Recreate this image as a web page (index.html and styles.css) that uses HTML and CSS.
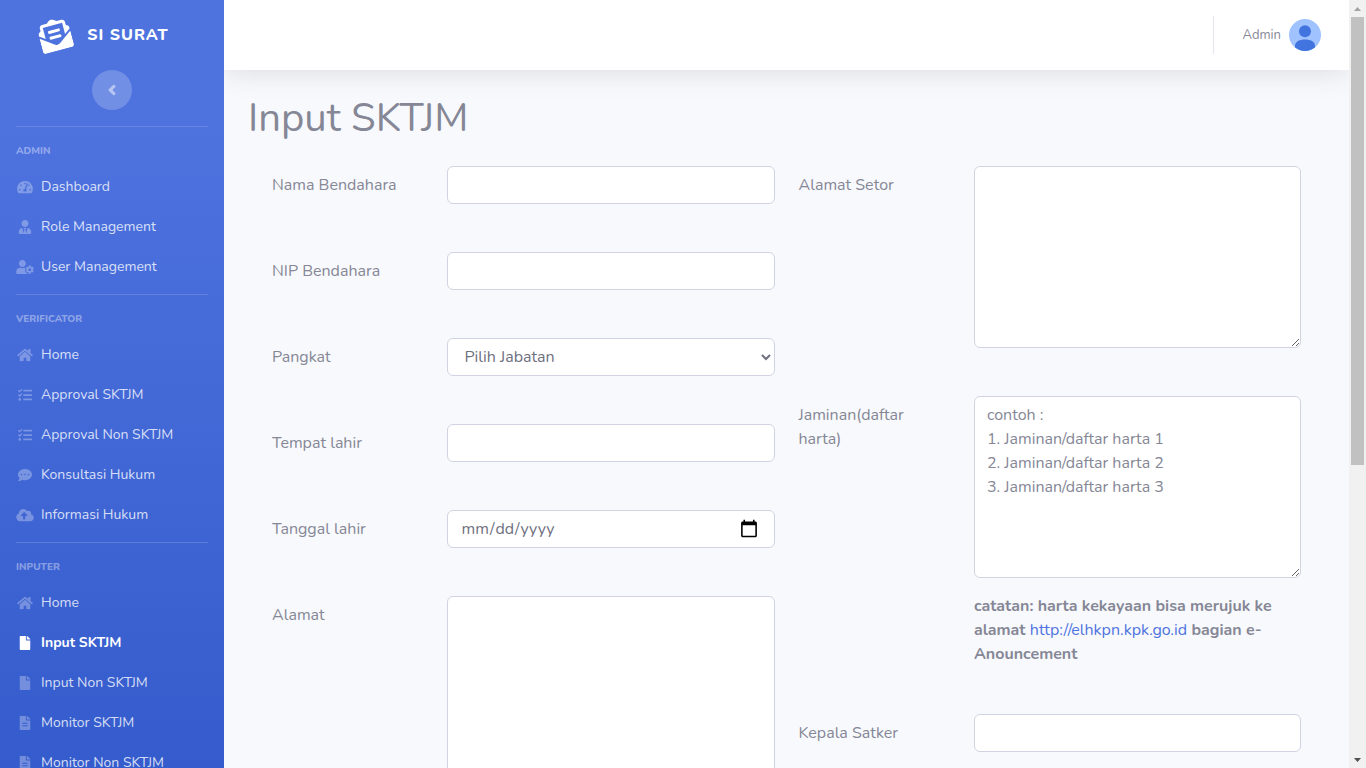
FILE: index.html
```html
<!DOCTYPE html>
<html lang="id">
<head>
<meta charset="utf-8">
<title>Input SKTJM</title>
<link rel="stylesheet" href="styles.css">
</head>
<body>
<svg class="sprite" aria-hidden="true">
  <symbol id="i-dash" viewBox="0 0 576 512"><path d="M288 32C128.94 32 0 160.94 0 320c0 52.8 14.25 102.26 39.06 144.8 5.61 9.62 16.3 15.2 27.44 15.2h443c11.14 0 21.83-5.58 27.44-15.2C561.75 422.26 576 372.8 576 320c0-159.06-128.94-288-288-288zm0 64c14.71 0 26.58 10.13 30.32 23.65-1.11 2.26-2.64 4.23-3.45 6.67l-9.22 27.67c-5.13 3.49-10.97 6.01-17.64 6.01-17.67 0-32-14.33-32-32S270.33 96 288 96zM96 384c-17.67 0-32-14.33-32-32s14.33-32 32-32 32 14.33 32 32-14.33 32-32 32zm48-160c-17.67 0-32-14.33-32-32s14.33-32 32-32 32 14.33 32 32-14.33 32-32 32zm246.77-72.41l-61.33 184C343.13 347.33 352 364.54 352 384c0 11.72-3.38 22.55-8.88 32H232.88c-5.5-9.45-8.88-20.28-8.88-32 0-33.94 26.5-61.43 59.9-63.59l61.34-184.01c4.17-12.56 17.73-19.45 30.36-15.17 12.57 4.19 19.35 17.79 15.17 30.36zm14.66 57.2l15.52-46.55c3.47-1.29 7.13-2.23 11.05-2.23 17.67 0 32 14.33 32 32s-14.33 32-32 32c-11.38-.01-20.89-6.28-26.57-15.22zM480 384c-17.67 0-32-14.33-32-32s14.33-32 32-32 32 14.33 32 32-14.33 32-32 32z"/></symbol>
  <symbol id="i-tie" viewBox="0 0 448 512"><path d="M224 256c70.7 0 128-57.3 128-128S294.7 0 224 0 96 57.3 96 128s57.3 128 128 128zm95.8 32.6L272 480l-32-136 32-56h-96l32 56-32 136-47.8-191.4C56.9 292 0 350.3 0 422.4V464c0 26.5 21.5 48 48 48h352c26.5 0 48-21.5 48-48v-41.6c0-72.1-56.9-130.4-128.2-133.8z"/></symbol>
  <symbol id="i-cog" viewBox="0 0 640 512"><path d="M610.5 373.3c2.6-14.1 2.6-28.5 0-42.6l25.8-14.9c3-1.7 4.3-5.2 3.3-8.5-6.7-21.6-18.2-41.2-33.2-57.4-2.3-2.5-6-3.1-9-1.4l-25.8 14.9c-10.9-9.3-23.4-16.5-36.9-21.3v-29.8c0-3.4-2.4-6.4-5.7-7.1-22.3-5-45-4.8-66.2 0-3.3.7-5.7 3.7-5.7 7.1v29.8c-13.5 4.8-26 12-36.9 21.3l-25.8-14.9c-2.9-1.7-6.7-1.1-9 1.4-15 16.2-26.5 35.8-33.2 57.4-1 3.3.4 6.8 3.3 8.5l25.8 14.9c-2.6 14.1-2.6 28.5 0 42.6l-25.8 14.9c-3 1.7-4.3 5.2-3.3 8.5 6.7 21.6 18.2 41.1 33.2 57.4 2.3 2.5 6 3.1 9 1.4l25.8-14.9c10.9 9.3 23.4 16.5 36.9 21.3v29.8c0 3.4 2.4 6.4 5.7 7.1 22.3 5 45 4.8 66.2 0 3.3-.7 5.7-3.7 5.7-7.1v-29.8c13.5-4.8 26-12 36.9-21.3l25.8 14.9c2.9 1.7 6.7 1.1 9-1.4 15-16.2 26.5-35.8 33.2-57.4 1-3.3-.4-6.8-3.3-8.5l-25.8-14.9zM496 400.5c-26.8 0-48.5-21.8-48.5-48.5s21.8-48.5 48.5-48.5 48.5 21.8 48.5 48.5-21.7 48.5-48.5 48.5zM224 256c70.7 0 128-57.3 128-128S294.7 0 224 0 96 57.3 96 128s57.3 128 128 128zm201.2 226.5c-2.3-1.2-4.6-2.6-6.8-3.9l-7.9 4.6c-6 3.4-12.8 5.3-19.6 5.3-10.9 0-21.4-4.6-28.9-12.6-18.3-19.8-32.3-43.9-40.2-69.6-5.5-17.7 1.9-36.4 17.9-45.7l7.9-4.6c-.1-2.6-.1-5.2 0-7.8l-7.9-4.6c-16-9.2-23.4-28-17.9-45.7.9-2.9 2.2-5.8 3.2-8.7-3.8-.3-7.5-1.2-11.4-1.2h-16.7c-22.2 10.2-46.9 16-72.9 16s-50.6-5.8-72.9-16h-16.7C60.2 288 0 348.2 0 422.4V464c0 26.5 21.5 48 48 48h352c10.1 0 19.5-3.2 27.2-8.5-1.2-3.8-2-7.7-2-11.8v-9.2z"/></symbol>
  <symbol id="i-home" viewBox="0 0 576 512"><path d="M280.37 148.26L96 300.11V464a16 16 0 0 0 16 16l112.06-.29a16 16 0 0 0 15.92-16V368a16 16 0 0 1 16-16h64a16 16 0 0 1 16 16v95.64a16 16 0 0 0 16 16.05L464 480a16 16 0 0 0 16-16V300L295.67 148.26a12.19 12.19 0 0 0-15.3 0zM571.6 251.47L488 182.56V44.05a12 12 0 0 0-12-12h-56a12 12 0 0 0-12 12v72.61L318.47 43a48 48 0 0 0-61 0L4.34 251.47a12 12 0 0 0-1.6 16.9l25.5 31A12 12 0 0 0 45.15 301l235.22-193.74a12.19 12.19 0 0 1 15.3 0L530.9 301a12 12 0 0 0 16.9-1.6l25.5-31a12 12 0 0 0-1.7-16.93z"/></symbol>
  <symbol id="i-tasks" viewBox="0 0 512 512"><path d="M139.61 35.5a12 12 0 0 0-17 0L58.93 98.81l-22.7-22.12a12 12 0 0 0-17 0L3.53 92.41a12 12 0 0 0 0 17l47.59 47.4a12.78 12.78 0 0 0 17.61 0l15.59-15.62L156.52 69a12.09 12.09 0 0 0 .09-17zm0 159.19a12 12 0 0 0-17 0l-63.68 63.72-22.7-22.1a12 12 0 0 0-17 0L3.53 252a12 12 0 0 0 0 17L51 316.5a12.77 12.77 0 0 0 17.6 0l15.7-15.69 72.2-72.22a12 12 0 0 0 .09-16.9zM64 368c-26.49 0-48.59 21.5-48.59 48S37.53 464 64 464a48 48 0 0 0 0-96zm432 16H208a16 16 0 0 0-16 16v32a16 16 0 0 0 16 16h288a16 16 0 0 0 16-16v-32a16 16 0 0 0-16-16zm0-320H208a16 16 0 0 0-16 16v32a16 16 0 0 0 16 16h288a16 16 0 0 0 16-16V80a16 16 0 0 0-16-16zm0 160H208a16 16 0 0 0-16 16v32a16 16 0 0 0 16 16h288a16 16 0 0 0 16-16v-32a16 16 0 0 0-16-16z"/></symbol>
  <symbol id="i-chat" viewBox="0 0 512 512"><path d="M256 32C114.6 32 0 125.1 0 240c0 49.6 21.4 95 57 130.7C44.5 421.1 2.7 466 2.2 466.5c-2.2 2.3-2.8 5.7-1.5 8.7S4.8 480 8 480c66.3 0 116-31.8 140.6-51.4 32.7 12.3 69 19.4 107.4 19.4 141.4 0 256-93.1 256-208S397.4 32 256 32zM128 272c-17.7 0-32-14.3-32-32s14.3-32 32-32 32 14.3 32 32-14.3 32-32 32zm128 0c-17.7 0-32-14.3-32-32s14.3-32 32-32 32 14.3 32 32-14.3 32-32 32zm128 0c-17.7 0-32-14.3-32-32s14.3-32 32-32 32 14.3 32 32-14.3 32-32 32z"/></symbol>
  <symbol id="i-cloud" viewBox="0 0 640 512"><path d="M537.6 226.6c4.1-10.7 6.4-22.4 6.4-34.6 0-53-43-96-96-96-19.7 0-38.1 6-53.3 16.2C367 64.2 315.3 32 256 32c-88.4 0-160 71.6-160 160 0 2.7.1 5.4.2 8.1C40.2 219.8 0 273.2 0 336c0 79.5 64.5 144 144 144h368c70.7 0 128-57.3 128-128 0-61.9-44-113.6-102.4-125.4zM393.4 288H328v112c0 8.8-7.2 16-16 16h-48c-8.8 0-16-7.2-16-16V288h-65.4c-14.3 0-21.4-17.2-11.3-27.3l105.4-105.4c6.2-6.2 16.4-6.2 22.6 0l105.4 105.4c10.1 10.1 2.9 27.3-11.3 27.3z"/></symbol>
  <symbol id="i-file" viewBox="0 0 384 512"><path d="M224 136V0H24C10.7 0 0 10.7 0 24v464c0 13.3 10.7 24 24 24h336c13.3 0 24-10.7 24-24V160H248c-13.2 0-24-10.8-24-24zm160-14.1v6.1H256V0h6.1c6.4 0 12.5 2.5 17 7l97.9 98c4.5 4.5 7 10.6 7 16.9z"/></symbol>
  <symbol id="i-filetext" viewBox="0 0 384 512"><path fill-rule="evenodd" d="M224 136V0H24C10.7 0 0 10.7 0 24v464c0 13.3 10.7 24 24 24h336c13.3 0 24-10.7 24-24V160H248c-13.2 0-24-10.8-24-24zm160-14.1v6.1H256V0h6.1c6.4 0 12.5 2.5 17 7l97.9 98c4.5 4.5 7 10.6 7 16.9zM96 246h192v34H96zM96 340h192v34H96z"/></symbol>
</svg>
<div class="app">
  <nav class="sidebar">
    <a class="brand" href="#">
      <svg class="brand-icon" viewBox="0 0 512 512" aria-hidden="true"><path d="M176 216h160c8.84 0 16-7.16 16-16v-16c0-8.84-7.16-16-16-16H176c-8.84 0-16 7.16-16 16v16c0 8.84 7.16 16 16 16zm-16 80c0 8.84 7.16 16 16 16h160c8.84 0 16-7.16 16-16v-16c0-8.84-7.16-16-16-16H176c-8.84 0-16 7.16-16 16v16zm96 121.13c-16.42 0-32.84-5.06-46.86-15.19L0 250.86V464c0 26.51 21.49 48 48 48h416c26.51 0 48-21.49 48-48V250.86L302.86 401.94c-14.02 10.12-30.44 15.19-46.86 15.19zm237.61-254.18c-8.85-6.94-17.24-13.47-29.61-22.81V96c0-26.51-21.49-48-48-48h-77.55c-3.04-2.2-5.87-4.26-9.04-6.56C312.6 29.17 279.2-.35 256 0c-23.2-.35-56.59 29.17-73.41 41.44-3.17 2.3-6 4.36-9.04 6.56H96c-26.51 0-48 21.49-48 48v44.14c-12.37 9.33-20.76 15.87-29.61 22.81A47.995 47.995 0 0 0 0 200.72v10.65l96 69.35V96h320v184.72l96-69.35v-10.65c0-14.74-6.78-28.67-18.39-37.77z"/></svg>
      <span class="brand-text">SI SURAT</span>
    </a>
    <button class="toggle" type="button" aria-label="Toggle sidebar"><svg class="toggle-icon" viewBox="0 0 256 512"><path d="M31.7 239l136-136c9.4-9.4 24.6-9.4 33.9 0l22.6 22.6c9.4 9.4 9.4 24.6 0 33.9L127.9 256l96.4 96.4c9.4 9.4 9.4 24.6 0 33.9L201.7 409c-9.4 9.4-24.6 9.4-33.9 0l-136-136c-9.5-9.4-9.5-24.6-.1-34z"/></svg></button>
    <section class="group">
      <h2 class="group-title">ADMIN</h2>
      <a class="link" href="#"><svg class="icon"><use href="#i-dash"/></svg>Dashboard</a>
      <a class="link" href="#"><svg class="icon"><use href="#i-tie"/></svg>Role Management</a>
      <a class="link" href="#"><svg class="icon"><use href="#i-cog"/></svg>User Management</a>
    </section>
    <section class="group">
      <h2 class="group-title">VERIFICATOR</h2>
      <a class="link" href="#"><svg class="icon"><use href="#i-home"/></svg>Home</a>
      <a class="link" href="#"><svg class="icon"><use href="#i-tasks"/></svg>Approval SKTJM</a>
      <a class="link" href="#"><svg class="icon"><use href="#i-tasks"/></svg>Approval Non SKTJM</a>
      <a class="link" href="#"><svg class="icon"><use href="#i-chat"/></svg>Konsultasi Hukum</a>
      <a class="link" href="#"><svg class="icon"><use href="#i-cloud"/></svg>Informasi Hukum</a>
    </section>
    <section class="group">
      <h2 class="group-title">INPUTER</h2>
      <a class="link" href="#"><svg class="icon"><use href="#i-home"/></svg>Home</a>
      <a class="link active" href="#"><svg class="icon"><use href="#i-file"/></svg>Input SKTJM</a>
      <a class="link" href="#"><svg class="icon"><use href="#i-file"/></svg>Input Non SKTJM</a>
      <a class="link" href="#"><svg class="icon"><use href="#i-filetext"/></svg>Monitor SKTJM</a>
      <a class="link" href="#"><svg class="icon"><use href="#i-filetext"/></svg>Monitor Non SKTJM</a>
    </section>
  </nav>
  <div class="page">
    <header class="topbar">
      <a class="user" href="#">Admin
        <svg class="avatar" viewBox="0 0 32 32" aria-hidden="true"><clipPath id="round"><circle cx="16" cy="16" r="16"/></clipPath><g clip-path="url(#round)"><path fill="#a0c3ff" d="M0 0h32v32H0z"/><circle cx="16" cy="12.3" r="6" fill="#4274e0"/><path fill="#4274e0" d="M6 27c0-4.500 4.500-6.500 10-6.500s10 2 10 6.500v5H6z"/></g></svg>
      </a>
    </header>
    <main class="content">
      <h1 class="title">Input SKTJM</h1>
      <form class="form">
        <div class="col">
          <div class="row"><label class="label" for="nama">Nama Bendahara</label><div class="cell"><input class="control" id="nama" type="text"></div></div>
          <div class="row"><label class="label" for="nip">NIP Bendahara</label><div class="cell"><input class="control" id="nip" type="text"></div></div>
          <div class="row"><label class="label" for="pangkat">Pangkat</label><div class="cell"><select class="control" id="pangkat"><option>Pilih Jabatan</option></select></div></div>
          <div class="row"><label class="label" for="tempat">Tempat lahir</label><div class="cell"><input class="control" id="tempat" type="text"></div></div>
          <div class="row"><label class="label" for="tanggal">Tanggal lahir</label><div class="cell"><input class="control" id="tanggal" type="date"></div></div>
          <div class="row"><label class="label" for="alamat">Alamat</label><div class="cell"><textarea class="control" id="alamat" rows="7"></textarea></div></div>
        </div>
        <div class="col">
          <div class="row"><label class="label" for="setor">Alamat Setor</label><div class="cell"><textarea class="control" id="setor" rows="7"></textarea></div></div>
          <div class="row"><label class="label" for="jaminan">Jaminan(daftar harta)</label><div class="cell"><textarea class="control" id="jaminan" rows="7" placeholder="contoh :
1. Jaminan/daftar harta 1
2. Jaminan/daftar harta 2
3. Jaminan/daftar harta 3"></textarea><p class="note">catatan: harta kekayaan bisa merujuk ke alamat <a class="note-link" href="http://elhkpn.kpk.go.id">http://elhkpn.kpk.go.id</a> bagian e-Anouncement</p></div></div>
          <div class="row"><label class="label" for="satker">Kepala Satker</label><div class="cell"><input class="control" id="satker" type="text"></div></div>
        </div>
      </form>
    </main>
  </div>
  <div class="scrollbar" aria-hidden="true">
    <svg class="arrow" viewBox="0 0 17 17"><path fill="#a3a3a3" d="M5 11h7L8.500 7z"/></svg>
    <div class="track"><div class="thumb"></div></div>
    <svg class="arrow" viewBox="0 0 17 17"><path fill="#505050" d="M5 7h7l-3.500 4z"/></svg>
  </div>
</div>
</body>
</html>
```
FILE: styles.css
```css
*, *::before, *::after { box-sizing: border-box; }
body {
  margin: 0;
  font-family: Nunito, Lato, sans-serif;
  font-size: 16px;
  line-height: 24px;
  color: #858796;
  background: #f8f9fc;
}
a { text-decoration: none; }
.sprite { display: none; }
.app { display: flex; height: 100vh; overflow: hidden; }

.sidebar {
  flex: 0 0 224px;
  overflow: hidden;
  background: linear-gradient(180deg, #4e73df 125px, #224abe 1255px);
}
.brand {
  display: flex;
  align-items: center;
  justify-content: center;
  gap: 16px;
  height: 70px;
  padding-right: 16px;
  color: #fff;
}
.brand-icon { width: 32px; height: 32px; fill: currentColor; transform: rotate(-15deg); }
.brand-text { font-size: 16px; font-weight: 800; letter-spacing: 1px; }
.toggle {
  display: flex;
  align-items: center;
  justify-content: center;
  width: 40px;
  height: 40px;
  margin: 0 auto 16px;
  padding: 0;
  border: 0;
  border-radius: 50%;
  background: rgba(255, 255, 255, .2);
}
.toggle-icon {
  width: 8px;
  height: 16px;
  fill: #b8c7f2;
  stroke: #b8c7f2;
  stroke-width: 24;
}
.group { padding-bottom: 7px; }
.group::before {
  content: "";
  display: block;
  margin: 0 16px 16px;
  border-top: 1px solid rgba(255, 255, 255, .15);
}
.group-title {
  margin: 0;
  padding: 0 16px 7px;
  font-size: 10px;
  line-height: 17px;
  font-weight: 800;
  color: rgba(255, 255, 255, .4);
}
.link {
  display: flex;
  align-items: center;
  gap: 7px;
  height: 40px;
  padding: 0 16px;
  font-size: 14px;
  color: rgba(255, 255, 255, .8);
}
.icon { width: 18px; height: 14px; fill: rgba(255, 255, 255, .3); }
.active { font-weight: 700; color: #fff; }
.active .icon { fill: #fff; }

.page { flex: 1; min-width: 0; overflow: hidden; }
.topbar {
  display: flex;
  align-items: center;
  justify-content: flex-end;
  height: 70px;
  padding: 0 28px;
  background: #fff;
  box-shadow: 0 2px 28px rgba(58, 59, 69, .15);
}
.user {
  display: flex;
  align-items: center;
  gap: 8px;
  height: 38px;
  padding-left: 28px;
  border-left: 1px solid #e3e6f0;
  font-size: 13px;
  color: #858796;
}
.avatar { width: 32px; height: 32px; }
.content { padding: 24px 24px 0; }
.title { margin: 0 0 24px; font-size: 40px; line-height: 48px; font-weight: 400; }
.form { display: flex; padding: 0 12px; }
.col { flex: 1 1 0; min-width: 0; }
.row { display: flex; margin-bottom: 48px; }
.label { flex: 0 0 33.33%; padding: 7px 12px; }
.cell { flex: 1; min-width: 0; padding: 0 12px; }
.control {
  display: block;
  width: 100%;
  height: 38px;
  margin: 0;
  padding: 6px 12px;
  border: 1px solid #d1d3e2;
  border-radius: 6px;
  background: #fff;
  font-family: inherit;
  font-size: 16px;
  line-height: 24px;
  color: #6e707e;
}
textarea.control { height: auto; resize: vertical; }
.control::placeholder { color: #858796; opacity: 1; }
.control::-webkit-calendar-picker-indicator { width: 20px; height: 20px; padding: 1px; margin-right: 2px; }
.note { margin: 16px 0 0; font-weight: 700; }
.note-link { font-weight: 400; color: #4e73df; }

.scrollbar { display: flex; flex-direction: column; flex: 0 0 17px; background: #f1f1f1; }
.arrow { width: 17px; height: 17px; }
.track { flex: 1; padding: 0 2px; }
.thumb { height: 61%; background: #c1c1c1; }
```
